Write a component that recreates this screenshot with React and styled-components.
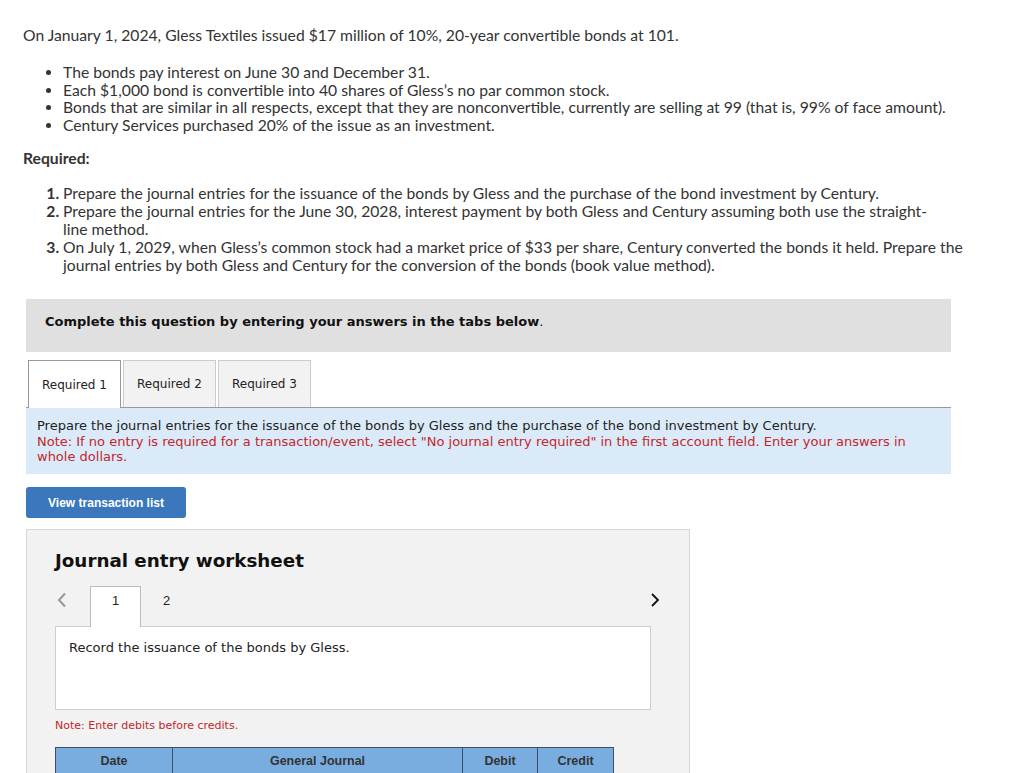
import React from "react";
import styled, { createGlobalStyle } from "styled-components";

const Global = createGlobalStyle`
  html, body { margin: 0; padding: 0; background: #fff; }
  body { font-family: "Lato", "Liberation Sans", sans-serif; color: #333; }
`;

const Page = styled.div`
  padding: 26px 0 0 23px;
  width: 942px;
`;

const Intro = styled.p`
  margin: 0;
  font-size: 15.7px;
  line-height: 18px;
  color: #333;
`;

const Bullets = styled.ul`
  margin: 20px 0 0 0;
  padding-left: 40px;
  font-size: 15.7px;
  line-height: 17.5px;
  li { padding-left: 0; }
`;

const ReqHead = styled.div`
  margin-top: 15px;
  font-size: 15.7px;
  line-height: 18px;
  font-weight: 700;
`;

const Steps = styled.ol`
  margin: 17px 0 0 0;
  padding-left: 40px;
  font-size: 15.7px;
  line-height: 18px;
`;

const Step = styled.li`
  padding-right: ${(p) => p.$pr || 0}px;
  &::marker { font-weight: 700; }
`;

const Panelish = styled.div`
  margin-left: 3px;
  width: 925px;
  font-family: "DejaVu Sans", Verdana, sans-serif;
`;

const Banner = styled.div`
  margin-top: 25px;
  height: 53px;
  box-sizing: border-box;
  background: #e0e0e0;
  padding: 15px 19px;
  font-size: 13px;
  line-height: 16px;
  font-weight: 700;
  color: #111;
  span { font-weight: 400; }
`;

const TabRow = styled.div`
  margin-top: 8px;
  display: flex;
  gap: 2px;
  padding-left: 2px;
  border-bottom: 1px solid #999;
`;

const Tab = styled.div`
  width: 93px;
  box-sizing: border-box;
  display: flex;
  align-items: center;
  justify-content: center;
  font-size: 12px;
  color: #222;
  background: ${(p) => (p.$active ? "#fff" : "#f2f2f2")};
  border: 1px solid ${(p) => (p.$active ? "#999" : "#ccc")};
  border-bottom: none;
  margin-bottom: ${(p) => (p.$active ? "-1px" : "0")};
  height: ${(p) => (p.$active ? "48px" : "47px")};
`;

const Instruct = styled.div`
  background: #dbeaf8;
  padding: 10px 30px 10px 11px;
  height: 66px;
  box-sizing: border-box;
  font-size: 13px;
  line-height: 15.5px;
  color: #222;
`;

const Red = styled.span`
  color: #c1272d;
`;

const ViewButton = styled.button`
  margin-top: 13px;
  width: 160px;
  height: 31px;
  border: none;
  border-radius: 3px;
  background: #3a77bc;
  color: #fff;
  font-family: "Liberation Sans", Arial, sans-serif;
  font-weight: 700;
  font-size: 12px;
  padding: 0;
  display: block;
`;

const Worksheet = styled.div`
  margin-top: 11px;
  width: 664px;
  height: 260px;
  box-sizing: border-box;
  background: #f2f2f2;
  border: 1px solid #d6d6d6;
  border-bottom: none;
  padding: 18px 0 0 28px;
`;

const Title = styled.h2`
  margin: 0;
  font-size: 18.3px;
  line-height: 26px;
  font-weight: 700;
  color: #111;
`;

const Nav = styled.div`
  margin-top: 12px;
  display: flex;
  align-items: flex-start;
  width: 605px;
  height: 40px;
`;

const Arrow = styled.div`
  width: 35px;
  height: 28px;
  display: flex;
  align-items: center;
  padding-left: 2px;
  box-sizing: border-box;
`;

const PageTab = styled.div`
  width: 51px;
  height: 41px;
  box-sizing: border-box;
  display: flex;
  justify-content: center;
  padding-top: 6px;
  font-family: "Liberation Sans", Arial, sans-serif;
  font-size: 13px;
  line-height: 16px;
  color: #222;
  background: ${(p) => (p.$active ? "#fff" : "transparent")};
  border: 1px solid ${(p) => (p.$active ? "#bbb" : "transparent")};
  border-bottom: none;
  position: relative;
  z-index: 1;
`;

const Spacer = styled.div`
  flex: 1;
`;

const RightArrow = styled.div`
  height: 28px;
  display: flex;
  align-items: center;
`;

const Record = styled.div`
  width: 596px;
  height: 84px;
  box-sizing: border-box;
  background: #fff;
  border: 1px solid #cfcfcf;
  padding: 12px 13px;
  font-size: 13px;
  line-height: 18px;
  color: #222;
`;

const Note = styled.div`
  margin-top: 9px;
  font-size: 11px;
  line-height: 14px;
  color: #c1272d;
`;

const Table = styled.table`
  margin-top: 14px;
  border-collapse: collapse;
  table-layout: fixed;
  width: 558px;
  font-family: "Liberation Sans", Arial, sans-serif;
`;

const Th = styled.th`
  background: #79ade0;
  border: 1px solid #3d4f66;
  border-bottom: none;
  height: 26px;
  padding: 0;
  font-size: 12.5px;
  font-weight: 700;
  color: #333;
`;

export default function App() {
  return (
    <>
      <Global />
      <Page>
        <Intro>
          On January 1, 2024, Gless Textiles issued $17 million of 10%, 20-year convertible bonds at 101.
        </Intro>
        <Bullets>
          <li>The bonds pay interest on June 30 and December 31.</li>
          <li>Each $1,000 bond is convertible into 40 shares of Gless’s no par common stock.</li>
          <li>Bonds that are similar in all respects, except that they are nonconvertible, currently are selling at 99 (that is, 99% of face amount).</li>
          <li>Century Services purchased 20% of the issue as an investment.</li>
        </Bullets>
        <ReqHead>Required:</ReqHead>
        <Steps>
          <Step>Prepare the journal entries for the issuance of the bonds by Gless and the purchase of the bond investment by Century.</Step>
          <Step $pr={20}>Prepare the journal entries for the June 30, 2028, interest payment by both Gless and Century assuming both use the straight-line method.</Step>
          <Step>On July 1, 2029, when Gless’s common stock had a market price of $33 per share, Century converted the bonds it held. Prepare the journal entries by both Gless and Century for the conversion of the bonds (book value method).</Step>
        </Steps>
        <Panelish>
          <Banner>
            Complete this question by entering your answers in the tabs below<span>.</span>
          </Banner>
          <TabRow>
            <Tab $active>Required 1</Tab>
            <Tab>Required 2</Tab>
            <Tab>Required 3</Tab>
          </TabRow>
          <Instruct>
            Prepare the journal entries for the issuance of the bonds by Gless and the purchase of the bond investment by Century.
            <br />
            <Red>
              Note: If no entry is required for a transaction/event, select "No journal entry required" in the first account field. Enter your answers in whole dollars.
            </Red>
          </Instruct>
          <ViewButton>View transaction list</ViewButton>
          <Worksheet>
            <Title>Journal entry worksheet</Title>
            <Nav>
              <Arrow>
                <svg width="10" height="16" viewBox="0 0 10 16">
                  <polyline points="8,1.5 2,8 8,14.5" fill="none" stroke="#999" strokeWidth="2" />
                </svg>
              </Arrow>
              <PageTab $active>1</PageTab>
              <PageTab>2</PageTab>
              <Spacer />
              <RightArrow>
                <svg width="10" height="16" viewBox="0 0 10 16">
                  <polyline points="2,2 8,8 2,14" fill="none" stroke="#111" strokeWidth="1.8" />
                </svg>
              </RightArrow>
            </Nav>
            <Record>Record the issuance of the bonds by Gless.</Record>
            <Note>Note: Enter debits before credits.</Note>
            <Table>
              <colgroup>
                <col style={{ width: 117 }} />
                <col style={{ width: 290 }} />
                <col style={{ width: 75 }} />
                <col style={{ width: 76 }} />
              </colgroup>
              <thead>
                <tr>
                  <Th>Date</Th>
                  <Th>General Journal</Th>
                  <Th>Debit</Th>
                  <Th>Credit</Th>
                </tr>
              </thead>
            </Table>
          </Worksheet>
        </Panelish>
      </Page>
    </>
  );
}
